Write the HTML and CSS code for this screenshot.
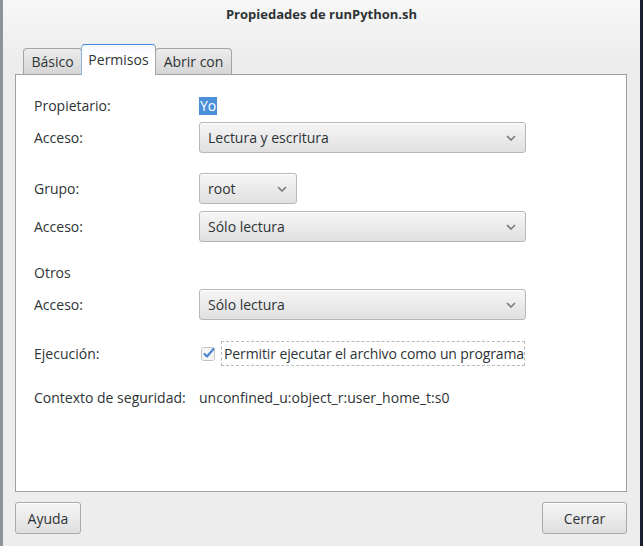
FILE: index.html
```html
<!DOCTYPE html>
<html lang="es">
<head>
<meta charset="utf-8">
<title>Propiedades de runPython.sh</title>
<link rel="stylesheet" href="styles.css">
</head>
<body>
<div class="window">
  <div class="titlebar">Propiedades de runPython.sh</div>
  <div class="tabs">
    <div class="tab t1">Básico</div>
    <div class="tab t2 active">Permisos</div>
    <div class="tab t3">Abrir con</div>
  </div>
  <div class="panel">
    <div class="row r-owner">
      <span class="label">Propietario:</span>
      <span class="value"><span class="selected">Yo</span></span>
    </div>
    <div class="row r-combo g8">
      <span class="label">Acceso:</span>
      <div class="combo wide"><span>Lectura y escritura</span><svg class="chev" width="10" height="6" viewBox="0 0 10 6"><path d="M1 1 L5 5 L9 1" fill="none" stroke="#7b7b7b" stroke-width="1.6"/></svg></div>
    </div>
    <div class="row r-combo g20">
      <span class="label">Grupo:</span>
      <div class="combo narrow"><span>root</span><svg class="chev" width="10" height="6" viewBox="0 0 10 6"><path d="M1 1 L5 5 L9 1" fill="none" stroke="#7b7b7b" stroke-width="1.6"/></svg></div>
    </div>
    <div class="row r-combo g7">
      <span class="label">Acceso:</span>
      <div class="combo wide"><span>Sólo lectura</span><svg class="chev" width="10" height="6" viewBox="0 0 10 6"><path d="M1 1 L5 5 L9 1" fill="none" stroke="#7b7b7b" stroke-width="1.6"/></svg></div>
    </div>
    <div class="row r-text g21">
      <span class="label">Otros</span>
    </div>
    <div class="row r-combo g8">
      <span class="label">Acceso:</span>
      <div class="combo wide"><span>Sólo lectura</span><svg class="chev" width="10" height="6" viewBox="0 0 10 6"><path d="M1 1 L5 5 L9 1" fill="none" stroke="#7b7b7b" stroke-width="1.6"/></svg></div>
    </div>
    <div class="row r-check g21">
      <span class="label">Ejecución:</span>
      <div class="check">
        <svg class="box" width="15" height="15" viewBox="0 0 15 15">
          <rect x="0.5" y="1.5" width="13" height="13" rx="2" fill="#f6f6f6" stroke="#c4c4c4"/>
          <path d="M3.5 8 L6 10.5 L12.5 3" fill="none" stroke="#4a86d4" stroke-width="2.2" stroke-linecap="round" stroke-linejoin="round"/>
        </svg>
        <span class="focus">Permitir ejecutar el archivo como un programa</span>
      </div>
    </div>
    <div class="row r-text g22">
      <span class="label">Contexto de seguridad:</span>
      <span class="value">unconfined_u:object_r:user_home_t:s0</span>
    </div>
  </div>
  <div class="buttons">
    <button class="btn help">Ayuda</button>
    <button class="btn close">Cerrar</button>
  </div>
</div>
</body>
</html>
```
FILE: styles.css
```css
* { box-sizing: border-box; }
html, body { margin: 0; padding: 0; }
body {
  width: 643px;
  height: 546px;
  overflow: hidden;
  background: #ededed;
  font-family: "Open Sans", "DejaVu Sans", sans-serif;
  font-size: 14px;
  color: #2e3436;
}
.window {
  height: 546px;
  border-left: 3px solid #8e939b;
  border-right: 3px solid #18222e;
  background: linear-gradient(#f7f7f7 0px, #ededed 60px, #ededed 100%);
  display: flex;
  flex-direction: column;
}
.titlebar {
  height: 29px;
  line-height: 29px;
  text-align: center;
  font-weight: bold;
  font-size: 13px;
  color: #2e3436;
}
.tabs {
  height: 45px;
  padding-top: 16px;
  padding-left: 20px;
  display: flex;
  align-items: flex-end;
  position: relative;
  z-index: 1;
}
.tab {
  height: 26px;
  line-height: 25px;
  text-align: center;
  border: 1px solid #a4a4a4;
  border-bottom: none;
  border-radius: 4px 4px 0 0;
  background: linear-gradient(#ececec, #d6d6d6);
  margin-right: -1px;
}
.t1 { width: 59px; }
.t2 { width: 75px; }
.t3 { width: 77px; }
.tab.active {
  height: 31px;
  line-height: 29px;
  background: linear-gradient(#f4f8fd 0px, #ffffff 10px);
  border-top: 1px solid #4a90d9;
  border-left-color: #8fb2d8;
  border-right-color: #a4a4a4;
  margin-bottom: -1px;
}
.panel {
  margin: 0 13px 0 12px;
  height: 418px;
  background: #ffffff;
  border: 1px solid #a0a0a0;
  padding: 21px 0 0 18px;
  display: flex;
  flex-direction: column;
}
.row {
  display: flex;
  align-items: center;
}
.label {
  width: 165px;
  flex: none;
}
.r-owner { height: 18px; }
.r-combo { height: 31px; }
.r-text { height: 18px; }
.r-check { height: 25px; }
.g7 { margin-top: 7px; }
.g8 { margin-top: 8px; }
.g20 { margin-top: 20px; }
.g21 { margin-top: 21px; }
.g22 { margin-top: 22px; }
.selected {
  background: #4a90d9;
  color: #ffffff;
  padding: 0 1px;
  display: inline-block;
  line-height: 18px;
}
.combo {
  height: 31px;
  border: 1px solid #b7b7b5;
  border-radius: 3px;
  background: linear-gradient(#f6f6f6, #e0e0e0);
  display: flex;
  align-items: center;
  justify-content: space-between;
  padding: 0 9px 0 8px;
  box-shadow: inset 0 1px 0 #ffffff;
}
.combo.wide { width: 327px; }
.combo.narrow { width: 98px; }
.chev { flex: none; }
.check {
  display: flex;
  align-items: center;
  height: 25px;
}
.box { margin-left: 2px; margin-right: 5px; }
.focus {
  height: 25px;
  line-height: 23px;
  padding: 0 2px;
  border: 1px dashed #b8b8b8;
  width: 304px;
  white-space: nowrap;
  letter-spacing: -0.11px;
}
.buttons {
  margin: 10px 13px 0 12px;
  display: flex;
  justify-content: space-between;
}
.btn {
  font-family: inherit;
  font-size: 14px;
  color: #2e3436;
  height: 32px;
  border: 1px solid #a9a9a9;
  border-radius: 3px;
  background: linear-gradient(#f6f6f6, #dedede);
  box-shadow: inset 0 1px 0 #ffffff;
  padding: 0;
}
.btn.help { width: 66px; }
.btn.close { width: 85px; }
```
